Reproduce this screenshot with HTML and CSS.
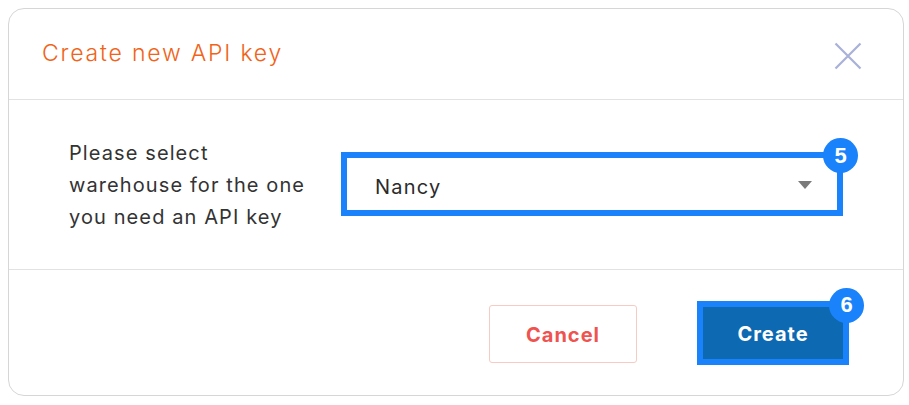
FILE: index.html
```html
<!DOCTYPE html>
<html lang="en">
<head>
<meta charset="utf-8">
<title>Create new API key</title>
<link rel="stylesheet" href="styles.css">
</head>
<body>
<div class="dialog">
  <div class="dialog-header">
    <h2 class="dialog-title">Create new API key</h2>
    <button class="close-btn" aria-label="Close">
      <svg width="28" height="28" viewBox="0 0 28 28"><path d="M1.5 1.5 L26.5 26.5 M26.5 1.5 L1.5 26.5" stroke="#a8b2d8" stroke-width="2.2" fill="none"/></svg>
    </button>
  </div>
  <div class="dialog-body">
    <label class="field-label">Please select warehouse for the one you need an API key</label>
    <div class="select">
      <span class="select-value">Nancy</span>
      <span class="select-arrow"></span>
      <span class="badge badge-select">5</span>
    </div>
  </div>
  <div class="dialog-footer">
    <button class="btn btn-cancel">Cancel</button>
    <div class="create-wrap">
      <button class="btn btn-create">Create</button>
      <span class="badge badge-create">6</span>
    </div>
  </div>
</div>
</body>
</html>
```
FILE: styles.css
```css
* { box-sizing: border-box; }
html, body { margin: 0; padding: 0; background: #ffffff; }
body { padding: 8px 0 0 8px; font-family: "Inter", "Open Sans", sans-serif; color: #333333; }

.dialog {
  width: 896px;
  height: 388px;
  border: 1px solid #d6d6d6;
  border-radius: 16px;
  background: #ffffff;
  display: flex;
  flex-direction: column;
}

.dialog-header {
  height: 91px;
  border-bottom: 1px solid #e2e2e2;
  display: flex;
  align-items: center;
  justify-content: space-between;
  padding: 0 41px 0 33px;
}
.dialog-title {
  margin: 0;
  font-weight: 300;
  font-size: 23px;
  color: #f06318;
  letter-spacing: 1.8px;
  padding-bottom: 2px;
}
.close-btn {
  border: 0;
  background: transparent;
  padding: 0;
  width: 28px;
  height: 28px;
  display: flex;
  margin-top: 4px;
}

.dialog-body {
  height: 170px;
  border-bottom: 1px solid #e2e2e2;
  display: flex;
  align-items: center;
  padding: 0 0 0 60px;
  gap: 20px;
}
.field-label {
  width: 252px;
  font-size: 20px;
  line-height: 32px;
  letter-spacing: 1.1px;
  color: #333333;
  margin-top: 1px;
}
.select {
  position: relative;
  width: 502px;
  height: 64px;
  border: 6px solid #1a82fb;
  display: flex;
  align-items: center;
  justify-content: space-between;
  padding: 0 25px 0 28px;
  margin-top: -1px;
}
.select-value { font-size: 20px; color: #2b2b2b; letter-spacing: 1.2px; padding-top: 6px; }
.select-arrow {
  width: 0; height: 0;
  border-left: 7px solid transparent;
  border-right: 7px solid transparent;
  border-top: 8px solid #7a7a7a;
  margin-top: 2px;
}

.badge {
  position: absolute;
  width: 35px;
  height: 35px;
  border-radius: 50%;
  background: #1a82fb;
  color: #ffffff;
  font-family: "Liberation Sans", Arial, sans-serif;
  font-weight: 700;
  font-size: 22px;
  display: flex;
  align-items: center;
  justify-content: center;
}
.badge-select { right: -21px; top: -20px; }
.badge-create { right: -15px; top: -13px; }

.dialog-footer {
  flex: 1;
  display: flex;
  align-items: center;
  justify-content: flex-end;
  padding: 0 54px 0 0;
  gap: 60px;
}
.btn {
  font-family: "Inter", "Open Sans", sans-serif;
  font-weight: 700;
  font-size: 20px;
  letter-spacing: 1px;
  cursor: pointer;
  padding-top: 3px;
}
.btn-cancel {
  width: 148px;
  height: 58px;
  border: 1px solid #f7cbc3;
  border-radius: 3px;
  background: #ffffff;
  color: #ef5350;
  margin-top: 3px;
}
.create-wrap { position: relative; }
.btn-create {
  display: block;
  width: 152px;
  height: 64px;
  border: 6px solid #1a82fb;
  background: #0c69b2;
  color: #ffffff;
}
```
